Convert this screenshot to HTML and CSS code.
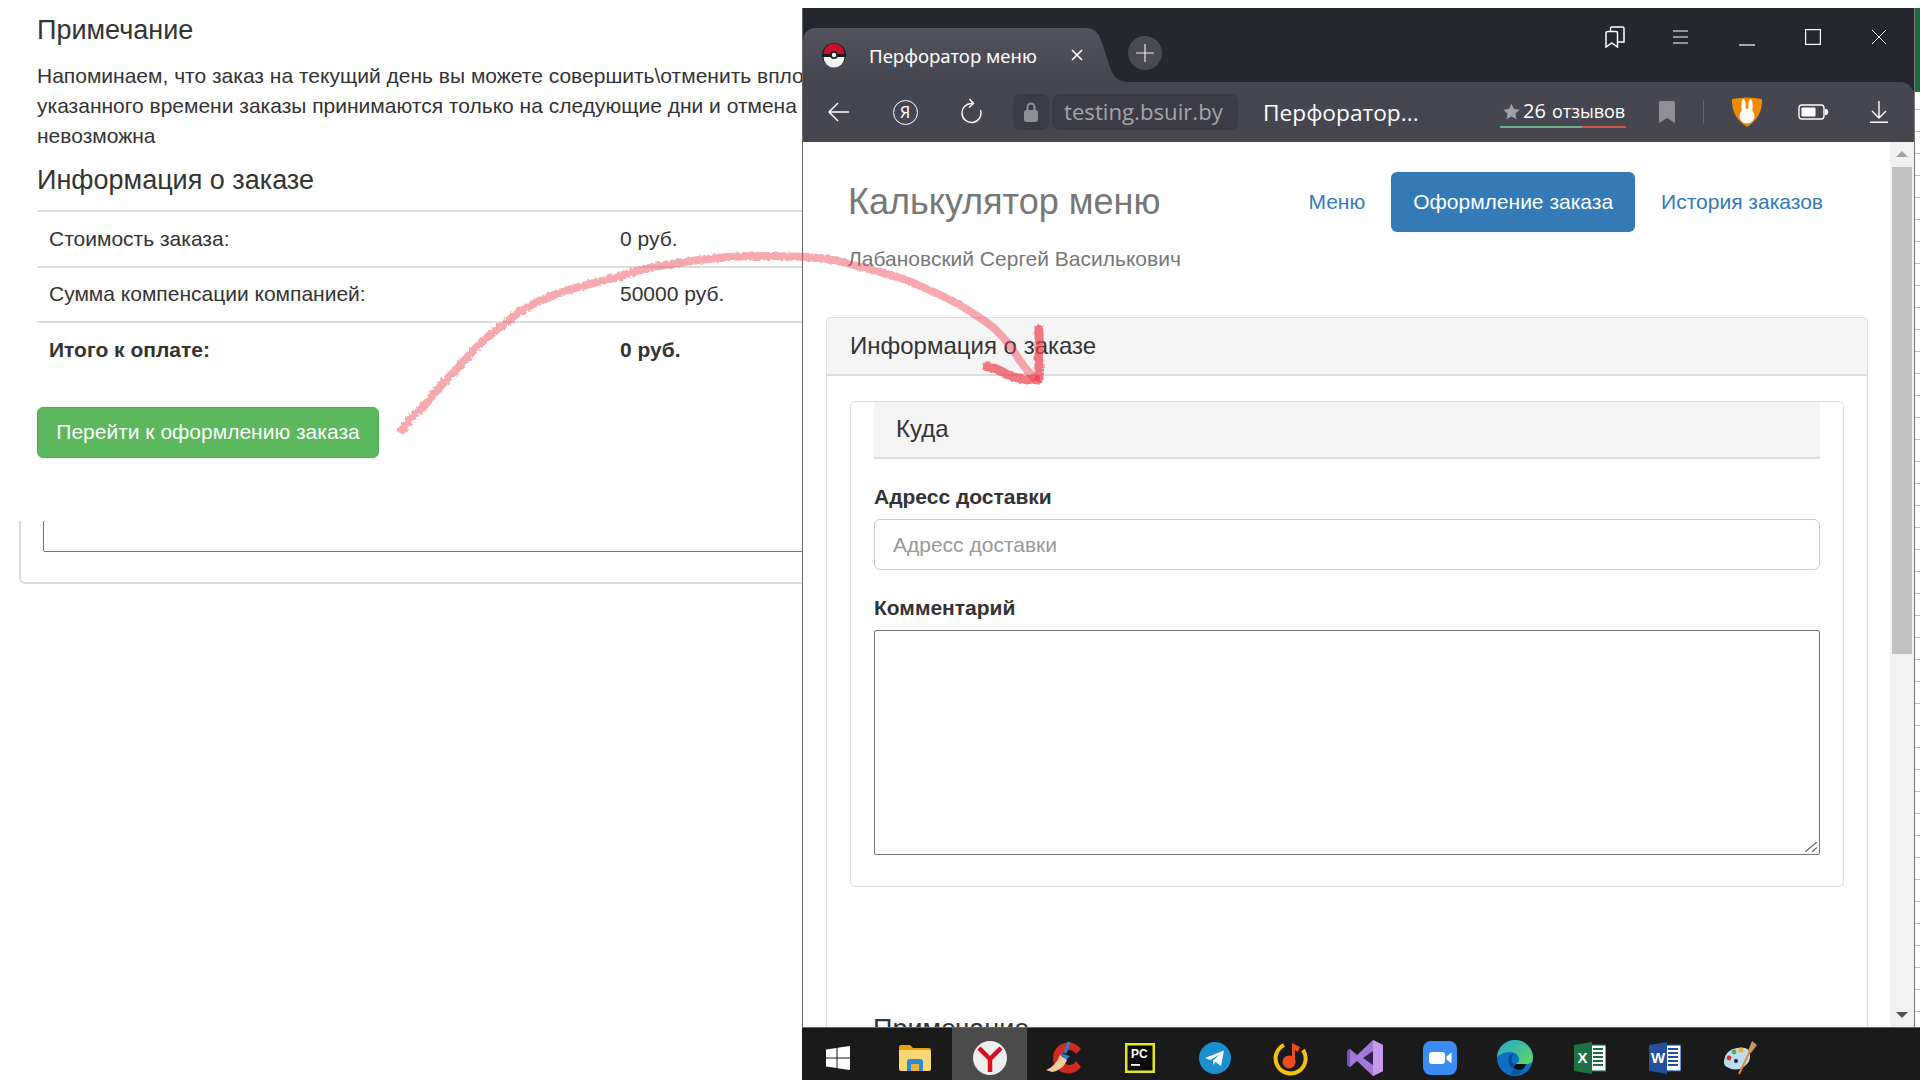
FILE: index.html
```html
<!DOCTYPE html>
<html lang="en">
<head>
    <meta charset="UTF-8">
    <meta name="viewport" content="width=device-width, initial-scale=1.0">
    <title>Перфоратор меню</title>
    <link rel="stylesheet" href="styles.css">
</head>
<body>
<div class="desktop">

    <!-- window behind, scrolled page -->
    <div class="back-page">
        <h4 class="note-title">Примечание</h4>
        <p class="note-text">Напоминаем, что заказ на текущий день вы можете совершить\отменить вплоть<br>указанного времени заказы принимаются только на следующие дни и отмена<br>невозможна</p>
        <h4 class="info-title">Информация о заказе</h4>
        <table class="order-table">
            <tr><td>Стоимость заказа:</td><td>0 руб.</td></tr>
            <tr><td>Сумма компенсации компанией:</td><td>50000 руб.</td></tr>
            <tr class="total"><td>Итого к оплате:</td><td>0 руб.</td></tr>
        </table>
        <button class="btn-green">Перейти к оформлению заказа</button>
    </div>
    <div class="back-card"><div class="back-area"></div></div>

    <div class="sheet"></div>

    <!-- browser window -->
    <div class="browser">
        <div class="tabstrip">
            <div class="tab">
                <svg class="tab-shape" width="326" height="54" viewBox="0 0 326 54"><defs><linearGradient id="tabFill" x1="0" y1="0" x2="0" y2="1"><stop offset="0" stop-color="#53535d"/><stop offset="1" stop-color="#464650"/></linearGradient></defs><path d="M0 54V14Q0 0 14 0H282Q294 0 298 12L308 42Q312 54 326 54Z" fill="url(#tabFill)"/></svg>
                <svg class="favicon" width="24" height="26" viewBox="0 0 24 26"><circle cx="12" cy="13" r="12" fill="#1b1b1b"/><path d="M1.500 12A10.500 10.500 0 0 1 22.500 12Z" fill="#c8102e"/><path d="M1.500 15A10.500 10.500 0 0 0 22.500 15Z" fill="#f2f2f2"/><circle cx="12" cy="13" r="4" fill="#222"/><circle cx="12" cy="13" r="2.200" fill="#eee"/></svg>
                <span class="tab-title">Перфоратор меню</span>
                <svg class="tab-close" width="12" height="12" viewBox="0 0 12 12"><path d="M1 1L11 11M11 1L1 11" stroke="#fff" stroke-width="1.600"/></svg>
            </div>
            <div class="new-tab"><svg width="18" height="18" viewBox="0 0 18 18"><path d="M9 0V18M0 9H18" stroke="#e6e6e8" stroke-width="1.200"/></svg></div>
            <div class="win-controls">
                <span class="win-btn"><svg width="20" height="22" viewBox="0 0 20 22" fill="none" stroke="#fff" stroke-width="1.500"><path d="M1 21V7Q1 5.500 2.500 5.500H11Q12.500 5.500 12.500 7V21L6.800 17Z"/><path d="M5.500 5.500V2.500Q5.500 1 7 1H17.500Q19 1 19 2.500V16L12.500 16"/></svg></span>
                <span class="win-btn"><svg width="16" height="14" viewBox="0 0 16 14"><path d="M0 1H15M0 7H15M0 13H15" stroke="#fff" stroke-width="1"/></svg></span>
                <span class="win-btn"><svg class="min-icon" width="16" height="2" viewBox="0 0 16 2"><path d="M0 1H16" stroke="#fff" stroke-width="1.200"/></svg></span>
                <span class="win-btn"><svg width="16" height="16" viewBox="0 0 16 16"><rect x=".6" y=".6" width="14.800" height="14.800" fill="none" stroke="#fff" stroke-width="1.200"/></svg></span>
                <span class="win-btn"><svg width="16" height="16" viewBox="0 0 16 16"><path d="M1 1L15 15M15 1L1 15" stroke="#fff" stroke-width="1"/></svg></span>
            </div>
        </div>

        <div class="toolbar">
            <span class="tool-slot"><svg width="22" height="20" viewBox="0 0 22 20" fill="none" stroke="#fff" stroke-width="1.500"><path d="M21 10H1M10 1L1 10L10 19"/></svg></span>
            <span class="tool-slot"><span class="ya-circle">Я</span></span>
            <span class="tool-slot"><svg width="22" height="28" viewBox="0 0 22 28" fill="none" stroke="#fff" stroke-width="1.400"><path d="M12 5.500A9.500 9.500 0 1 0 20.500 12"/><path d="M9.500 1L13.500 5.500L9 9.500"/></svg></span>
            <span class="lock-box"><svg width="14" height="20" viewBox="0 0 14 20"><rect y="8" width="14" height="12" rx="2.500" fill="#8b8e95"/><path d="M3.500 9V5A3.500 3.500 0 0 1 10.500 5V9" fill="none" stroke="#8b8e95" stroke-width="2"/></svg></span>
            <span class="url-box">testing.bsuir.by</span>
            <span class="page-title">Перфоратор...</span>
            <span class="rating">
                <svg width="17" height="17" viewBox="0 0 24 24"><path d="M12 1L15.400 8.500L23.500 9.400L17.500 14.800L19.100 23L12 18.900L4.900 23L6.500 14.800L.5 9.400L8.600 8.500Z" fill="#a0a0a6"/></svg>
                <span class="rating-num">26</span><span class="rating-word">отзывов</span>
            </span>
            <svg class="bookmark" width="16" height="22" viewBox="0 0 16 22"><path d="M0 2Q0 0 2 0H14Q16 0 16 2V22L8 17L0 22Z" fill="#8f8f95"/></svg>
            <span class="divider"></span>
            <svg class="shield" width="30" height="30" viewBox="0 0 30 30"><path d="M0 2Q15 -1 30 2Q31 20 15 30Q-1 20 0 2Z" fill="#f18a07"/><ellipse cx="11.500" cy="9" rx="2.200" ry="7" fill="#fff"/><ellipse cx="18.500" cy="9" rx="2.200" ry="7" fill="#fff"/><circle cx="15" cy="19" r="7.500" fill="#fff"/></svg>
            <svg class="battery" width="30" height="16" viewBox="0 0 30 16"><rect x="1" y="1" width="25" height="14" rx="3" fill="none" stroke="#fff" stroke-width="1.400"/><rect x="3.500" y="3.500" width="14" height="9" fill="#fff" rx="1"/><path d="M27 5H28Q30 5 30 7V9Q30 11 28 11H27Z" fill="#fff"/></svg>
            <svg class="download" width="18" height="22" viewBox="0 0 18 22" fill="none" stroke="#fff" stroke-width="1.400"><path d="M9 0V17M2 10L9 17L16 10M0 21.300H18"/></svg>
        </div>

        <div class="viewport">
            <div class="page">
                <div class="page-head">
                    <h3 class="brand">Калькулятор меню</h3>
                    <ul class="nav">
                        <li><a href="#">Меню</a></li>
                        <li class="active"><a href="#">Оформление заказа</a></li>
                        <li><a href="#">История заказов</a></li>
                    </ul>
                </div>
                <div class="user-name">Лабановский Сергей Василькович</div>

                <div class="panel">
                    <div class="panel-heading">Информация о заказе</div>
                    <div class="panel-body">
                        <div class="inner-panel">
                            <div class="inner-heading">Куда</div>
                            <label class="field-label">Адресс доставки</label>
                            <input class="field-input" type="text" placeholder="Адресс доставки">
                            <label class="field-label label-comment">Комментарий</label>
                            <div class="area-wrap">
                                <textarea class="field-area"></textarea>
                                <svg class="grip" width="12" height="10" viewBox="0 0 12 10"><path d="M0 10L12 0M7 10L12 5.500" stroke="#666" stroke-width="1.300"/></svg>
                            </div>
                        </div>
                        <h4 class="note-title-2">Примечание</h4>
                    </div>
                </div>
            </div>
            <div class="scrollbar">
                <span class="arrow-up"></span>
                <span class="thumb"></span>
                <span class="arrow-down"></span>
            </div>
        </div>
    </div>

    <!-- taskbar -->
    <div class="taskbar">
        <span class="task task-first"><svg width="24" height="24" viewBox="0 0 24 24" fill="#fff"><path d="M0 3.500L10.500 2V11.500H0ZM11.500 1.800L24 0V11.500H11.500ZM0 12.500H10.500V22L0 20.500ZM11.500 12.500H24V24L11.500 22.200Z"/></svg></span>
        <span class="task"><svg width="32" height="26" viewBox="0 0 32 26"><path d="M0 2Q0 0 2 0H11L14 3H30Q32 3 32 5V8H0Z" fill="#e2a50e"/><path d="M0 5H30Q32 5 32 7V24Q32 26 30 26H2Q0 26 0 24Z" fill="#f8d775"/><path d="M8 26V17Q8 14 11 14H21Q24 14 24 17V26H20V19H12V26Z" fill="#2a8bd6"/><rect x="12" y="19" width="8" height="7" fill="#e8b13a"/></svg></span>
        <span class="task task-active"><svg width="34" height="34" viewBox="0 0 34 34"><circle cx="17" cy="17" r="17" fill="#efefef"/><path d="M6 7L17 18L28 7M17 18V31" fill="none" stroke="#d3101c" stroke-width="4.500"/></svg></span>
        <span class="task"><svg width="37" height="34" viewBox="0 0 37 34"><path d="M34 8A15.500 15.500 0 1 0 34 26L29 20A7.500 7.500 0 1 1 29 13Z" fill="#cf2a20" transform="translate(1 0)"/><path d="M19 12L23 1" stroke="#2f7fd0" stroke-width="3.200"/><path d="M14 12L24 15L20 19Z" fill="#2f7fd0"/><path d="M14 14L21 19Q17 29 6 31L0 29Q10 25 14 14Z" fill="#eccb9c"/></svg></span>
        <span class="task"><svg width="30" height="30" viewBox="0 0 30 30"><rect width="30" height="30" fill="#e4e620"/><rect x="2.500" y="2.500" width="25" height="25" fill="#0b0b0b"/><text class="pc-text" x="6" y="14.500">PC</text><rect x="6" y="21" width="9" height="1.800" fill="#fff"/></svg></span>
        <span class="task"><svg width="32" height="32" viewBox="0 0 32 32"><circle cx="16" cy="16" r="16" fill="#1c8fd0"/><path d="M6 16L25 8.500L22 24L16.500 20L14 23V18.500L21 12L11.500 18Z" fill="#f4f8fb"/></svg></span>
        <span class="task"><svg width="36" height="36" viewBox="0 0 36 36"><path d="M12 5A15 15 0 1 0 31 10" fill="none" stroke="#f4c20d" stroke-width="4"/><circle cx="17" cy="22" r="6.500" fill="#ee4b20"/><path d="M20 22V3L28 7L26 12L23 10V22Z" fill="#ee4b20"/></svg></span>
        <span class="task"><svg width="36" height="36" viewBox="0 0 36 36"><path d="M26 0L36 5V31L26 36L10 21L3 27L0 25V11L3 9L10 15Z" fill="#a07ad8"/><path d="M26 0L36 5V31L26 36Z" fill="#c79af0"/><path d="M26 11V25L16 18Z" fill="#32204e"/><path d="M0 11L3 9V27L0 25Z" fill="#7550b5"/></svg></span>
        <span class="task"><svg width="34" height="34" viewBox="0 0 34 34"><rect width="34" height="34" rx="8" fill="#3b8cf0"/><rect x="6" y="11" width="16" height="12" rx="3" fill="#fff"/><path d="M23.500 15.500L28.500 11.500V22.500L23.500 18.500Z" fill="#fff"/></svg></span>
        <span class="task"><svg width="36" height="36" viewBox="0 0 36 36"><defs><linearGradient id="edgeTop" x1="0" y1="0" x2="1" y2="1"><stop offset="0" stop-color="#22a6d8"/><stop offset="1" stop-color="#63d85a"/></linearGradient></defs><circle cx="18" cy="18" r="18" fill="#0c6fc4"/><path d="M0 17A18 18 0 0 1 36 19Q36 24 29 24H19Q23 22 22 18Q20 12 13 12Q5 12 0 17Z" fill="url(#edgeTop)"/><path d="M17 13Q9 15 12 24Q15 31 25 32Q19 36 14 34Q17 28 17 24Q12 20 17 13Z" fill="#0a4b96"/><path d="M19 24H29Q26 33 18 29Q15 27 19 24Z" fill="#111"/></svg></span>
        <span class="task"><svg width="32" height="32" viewBox="0 0 32 32"><rect x="12" y="3" width="20" height="26" fill="#fff" stroke="#1d7044" stroke-width="1.200"/><path d="M19 7H29M19 11H29M19 15H29M19 19H29M19 23H29" stroke="#1d7044" stroke-width="2"/><path d="M0 3L18 0V32L0 29Z" fill="#1d7044"/><text class="office-text" x="3.500" y="21">X</text></svg></span>
        <span class="task"><svg width="32" height="32" viewBox="0 0 32 32"><rect x="12" y="3" width="20" height="26" fill="#fff" stroke="#234f9c" stroke-width="1.200"/><path d="M19 7H29M19 11H29M19 15H29M19 19H29M19 23H29" stroke="#234f9c" stroke-width="2"/><path d="M0 3L18 0V32L0 29Z" fill="#234f9c"/><text class="office-text" x="2" y="21">W</text></svg></span>
        <span class="task"><svg width="34" height="34" viewBox="0 0 34 34"><path d="M1 20Q2 9 14 7Q26 5 27 13Q28 20 22 25Q14 31 6 27Q0 25 1 20Z" fill="#bcdcef"/><circle cx="6" cy="17" r="2.400" fill="#d8392b"/><circle cx="11" cy="11" r="2.400" fill="#5aa84a"/><circle cx="18" cy="9" r="2.600" fill="#f0b429"/><circle cx="13" cy="20" r="2" fill="#223"/><path d="M16 33L27 10" stroke="#e8862a" stroke-width="2"/><path d="M25 10L29 0L34 4L28 12Z" fill="#c79a5c"/></svg></span>
    </div>

    <!-- hand drawn arrow over everything -->
    <svg class="scribble" width="1920" height="1080" viewBox="0 0 1920 1080">
        <defs>
            <filter id="rough" x="-5%" y="-5%" width="110%" height="110%">
                <feTurbulence type="fractalNoise" baseFrequency="0.3" numOctaves="2" seed="4"/>
                <feDisplacementMap in="SourceGraphic" scale="4"/>
            </filter>
        </defs>
        <g fill="none" stroke="#ee3f4d" stroke-linecap="butt" stroke-linejoin="round" filter="url(#rough)">
            <path class="arrow-line" d="M400 433C408 420 416 412 425 405C440 385 458 368 474 350C485 338 496 330 507 322C522 308 538 301 554 295C580 285 602 282 625 275C640 268 690 260 728 257C760 255 785 256 804 257C825 258 838 260 849 264C872 270 895 275 916 284C935 293 948 298 960 305C975 315 988 322 996 330C1008 342 1014 350 1018 358C1025 368 1030 374 1036 380"/>
            <path class="arrow-head" d="M1039 325V382"/>
            <path class="arrow-head" d="M983 366C995 367 1002 371 1008 375C1018 379 1026 380 1040 380"/>
        </g>
    </svg>
</div>
</body>
</html>
```

FILE: styles.css
```css
* {
    box-sizing: border-box;
}
html, body {
    margin: 0;
    padding: 0;
}
body {
    font-family: "Liberation Sans", Arial, sans-serif;
    font-size: 21px;
    line-height: 30px;
    color: #333;
    background: #fff;
}
.desktop {
    position: relative;
    width: 1920px;
    height: 1080px;
    overflow: hidden;
    background: #fff;
}

/* back window */
.back-page {
    position: absolute;
    left: 0;
    top: 0;
    width: 802px;
    height: 521px;
    padding: 15px 0 0 37px;
    overflow: hidden;
    white-space: nowrap;
}
.note-title, .info-title, .note-title-2 {
    margin: 0;
    font-size: 27px;
    font-weight: 500;
    line-height: 30px;
}
.note-text {
    margin: 16px 0 0;
}
.info-title {
    margin-top: 14px;
}
.order-table {
    width: 1180px;
    margin-top: 15px;
    border-collapse: collapse;
}
.order-table td {
    height: 55.5px;
    padding: 0 12px;
    border-top: 2px solid #ddd;
}
.order-table td:first-child {
    width: 571px;
}
.order-table .total td {
    font-weight: bold;
}
.btn-green {
    display: block;
    width: 342px;
    height: 51px;
    margin-top: 29px;
    border: 1px solid #4cae4c;
    border-radius: 6px;
    background: #5cb85c;
    color: #fff;
    font-family: inherit;
    font-size: 21px;
}
.back-card {
    position: absolute;
    left: 19px;
    top: 521px;
    width: 900px;
    height: 63px;
    padding-left: 22px;
    border: 2px solid #ddd;
    border-top: 0;
    border-radius: 0 0 6px 6px;
}
.back-area {
    height: 31px;
    border: 1px solid #767676;
    border-top: 0;
    border-radius: 0 0 2px 2px;
}
.sheet {
    position: absolute;
    left: 1914px;
    top: 0;
    width: 6px;
    height: 1080px;
    background:
        linear-gradient(#1d6b41, #1d6b41) 0 8px / 100% 84px no-repeat,
        repeating-linear-gradient(#fff 0 21px, #bbb 21px 22px);
}

/* browser window */
.browser {
    position: absolute;
    left: 802px;
    top: 8px;
    width: 1113px;
    height: 1019px;
    display: flex;
    flex-direction: column;
    background: #25272f;
    border-left: 1px solid #666;
    border-right: 1px solid #777;
}
.tabstrip {
    position: relative;
    display: flex;
    align-items: flex-start;
    height: 74px;
}
.tab {
    position: relative;
    display: flex;
    align-items: center;
    width: 322px;
    height: 54px;
    margin-top: 20px;
    padding: 0 0 0 19px;
    color: #fff;
}
.tab-shape {
    position: absolute;
    left: 0;
    top: 0;
}
.favicon, .tab-title, .tab-close {
    position: relative;
}
.tab-title {
    width: 168px;
    margin-left: 23px;
    margin-right: 34px;
    padding-top: 2px;
    font-family: "Noto Sans", sans-serif;
    font-size: 18.6px;
    line-height: 24px;
    white-space: nowrap;
}
.new-tab {
    display: flex;
    align-items: center;
    justify-content: center;
    width: 34px;
    height: 34px;
    margin: 28px 0 0 3px;
    border-radius: 50%;
    background: #4a4a54;
}
.win-controls {
    display: flex;
    align-items: center;
    height: 58px;
    margin-left: auto;
    padding-right: 2px;
}
.win-btn {
    display: flex;
    align-items: center;
    justify-content: center;
    width: 66px;
    height: 58px;
}
.min-icon {
    margin-top: 15px;
}
.toolbar {
    display: flex;
    align-items: center;
    height: 60px;
    padding-left: 3px;
    border-radius: 0 14px 0 0;
    background: #464650;
}
.tool-slot {
    display: flex;
    align-items: center;
    justify-content: center;
    width: 66px;
    height: 60px;
}
.ya-circle {
    display: block;
    width: 25px;
    height: 25px;
    border: 1px solid #fff;
    border-radius: 50%;
    color: #fff;
    font-family: "Noto Sans", sans-serif;
    font-size: 16px;
    line-height: 23px;
    text-align: center;
}
.lock-box {
    display: flex;
    align-items: center;
    justify-content: center;
    width: 36px;
    height: 36px;
    margin-left: 9px;
    border-radius: 7px;
    background: #3b3c45;
}
.url-box {
    width: 186px;
    height: 36px;
    margin-left: 3px;
    padding-left: 12px;
    border-radius: 7px;
    background: #3b3c45;
    color: #a3a4aa;
    font-family: "Open Sans", sans-serif;
    font-size: 22.2px;
    line-height: 36px;
    white-space: nowrap;
}
.page-title {
    width: 237px;
    margin-left: 25px;
    padding-top: 2px;
    color: #fff;
    font-family: "Open Sans", sans-serif;
    font-size: 22.7px;
    white-space: nowrap;
}
.rating {
    display: flex;
    align-items: center;
    width: 126px;
    height: 32px;
    padding-left: 3px;
    border-bottom: 2px solid;
    border-image: linear-gradient(90deg, #66b08a 65%, #d0544c 65%) 1;
    color: #fff;
    font-family: "Open Sans", sans-serif;
    white-space: nowrap;
}
.rating-num {
    margin-left: 3px;
    font-size: 20px;
}
.rating-word {
    margin-left: 6px;
    font-size: 18px;
}
.bookmark {
    margin-left: 33px;
}
.divider {
    width: 1px;
    height: 24px;
    margin-left: 28px;
    background: #66666e;
}
.shield {
    margin-left: 28px;
}
.battery {
    margin-left: 36px;
}
.download {
    margin-left: 42px;
}

/* page in the browser */
.viewport {
    display: flex;
    flex: 1;
    min-height: 0;
    background: #fff;
}
.page {
    flex: 1;
    min-width: 0;
    padding: 30px 22px 0 23px;
    overflow: hidden;
}
.page-head {
    display: flex;
    align-items: center;
    justify-content: space-between;
    height: 60px;
    padding-left: 22px;
}
.brand {
    margin: 0;
    color: #777;
    font-size: 36px;
    font-weight: 500;
    line-height: 40px;
}
.nav {
    display: flex;
    gap: 4px;
    margin: 0;
    padding: 0 23px 0 0;
    list-style: none;
}
.nav a {
    display: block;
    padding: 0 22px;
    border-radius: 6px;
    color: #337ab7;
    line-height: 60px;
    text-decoration: none;
}
.nav .active a {
    background: #337ab7;
    color: #fff;
}
.user-name {
    margin: 12px 0 0 22px;
    color: #777;
}
.panel {
    height: 800px;
    margin-top: 43px;
    border: 1px solid #ddd;
    border-bottom: 0;
    border-radius: 5px 5px 0 0;
}
.panel-heading {
    height: 58px;
    padding: 0 23px;
    border-bottom: 2px solid #ddd;
    border-radius: 5px 5px 0 0;
    background: #f5f5f5;
    font-size: 24px;
    line-height: 56px;
}
.panel-body {
    padding: 25px 23px 0 23px;
}
.inner-panel {
    display: flex;
    flex-direction: column;
    height: 486px;
    padding: 0 23px;
    border: 1px solid #ddd;
    border-radius: 5px;
}
.inner-heading {
    height: 57px;
    padding-left: 22px;
    border-bottom: 2px solid #ddd;
    background: #f5f5f5;
    font-size: 24px;
    line-height: 53px;
}
.field-label {
    margin-top: 23px;
    font-weight: bold;
    line-height: 30px;
}
.label-comment {
    margin-top: 23px;
}
.field-input {
    height: 51px;
    margin-top: 7px;
    padding: 0 18px;
    border: 1px solid #ccc;
    border-radius: 6px;
    font-family: inherit;
    font-size: 21px;
    color: #555;
}
.field-input::placeholder {
    color: #999;
}
.area-wrap {
    position: relative;
    height: 225px;
    margin-top: 7px;
}
.field-area {
    display: block;
    width: 100%;
    height: 100%;
    border: 1px solid #767676;
    border-radius: 2px;
    outline: none;
    resize: none;
}
.grip {
    position: absolute;
    right: 3px;
    bottom: 3px;
}
.note-title-2 {
    margin: 127px 0 0 23px;
}
.scrollbar {
    position: relative;
    width: 24px;
    background: #f1f1f1;
}
.thumb {
    position: absolute;
    left: 2px;
    top: 25px;
    width: 20px;
    height: 487px;
    background: #c1c1c1;
}
.arrow-up, .arrow-down {
    position: absolute;
    left: 6px;
    width: 0;
    height: 0;
    border-left: 6px solid transparent;
    border-right: 6px solid transparent;
}
.arrow-up {
    top: 9px;
    border-bottom: 6px solid #a3a3a3;
}
.arrow-down {
    bottom: 9px;
    border-top: 6px solid #505050;
}

/* taskbar */
.taskbar {
    position: absolute;
    left: 802px;
    top: 1027px;
    display: flex;
    width: 1118px;
    height: 53px;
    border-top: 1px solid #666;
    background: #1a1a1a;
}
.task {
    display: flex;
    align-items: center;
    justify-content: center;
    width: 75px;
    height: 52px;
    padding-top: 8px;
}
.task-first {
    padding-right: 3px;
}
.task-active {
    background: #4b4b4b;
}
.pc-text {
    fill: #fff;
    font-family: "Liberation Sans", sans-serif;
    font-size: 12px;
    font-weight: bold;
}
.office-text {
    fill: #fff;
    font-family: "Liberation Sans", sans-serif;
    font-size: 15px;
    font-weight: bold;
}

/* arrow drawn on top of the screenshot */
.scribble {
    position: absolute;
    left: 0;
    top: 0;
    pointer-events: none;
}
.arrow-line {
    stroke-width: 8px;
    opacity: 0.45;
}
.arrow-head {
    stroke-width: 9px;
    opacity: 0.7;
}
```
